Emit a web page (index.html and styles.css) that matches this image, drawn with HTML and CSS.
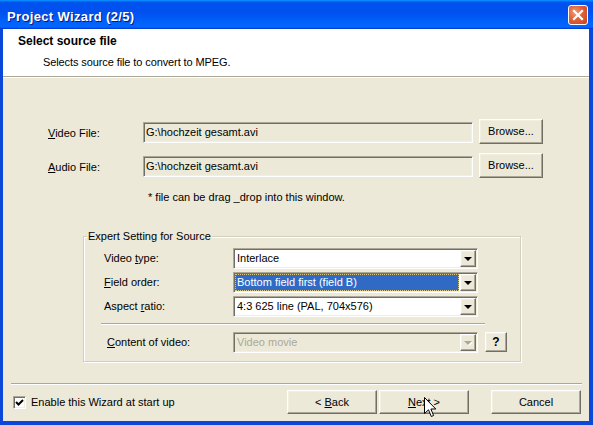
FILE: index.html
```html
<!DOCTYPE html>
<html lang="en">
<head>
<meta charset="utf-8">
<title>Project Wizard (2/5)</title>
<link rel="stylesheet" href="styles.css">
</head>
<body>
<div class="window">
  <div class="titlebar">
    <span class="title">Project Wizard (2/5)</span>
    <button class="close" aria-label="Close">
      <svg viewBox="0 0 18 18" width="18" height="18"><path d="M5 5 L13 13 M13 5 L5 13" stroke="#fff" stroke-width="2.2" stroke-linecap="square"/></svg>
    </button>
  </div>
  <div class="client">
    <div class="header">
      <div class="h-title">Select source file</div>
      <div class="h-sub">Selects source file to convert to MPEG.</div>
    </div>
    <div class="body">
      <div class="main">
        <div class="files">
          <span class="flabel"><u>V</u>ideo File:</span>
          <div class="field sunken">G:\hochzeit gesamt.avi</div>
          <button class="btn raised browse">Browse...</button>
          <span class="flabel"><u>A</u>udio File:</span>
          <div class="field sunken">G:\hochzeit gesamt.avi</div>
          <button class="btn raised browse">Browse...</button>
        </div>
        <div class="note">* file can be drag _drop into this window.</div>
        <fieldset class="group">
          <legend>Expert Setting for Source</legend>
          <div class="grid">
            <span class="glabel">Video <u>t</u>ype:</span>
            <div class="combo sunken"><span class="val">Interlace</span><span class="dd raised"><i class="tri"></i></span></div>
            <span class="glabel"><u>F</u>ield order:</span>
            <div class="combo sunken"><span class="val sel">Bottom field first (field B)</span><span class="dd raised"><i class="tri"></i></span></div>
            <span class="glabel">Aspect <u>r</u>atio:</span>
            <div class="combo sunken"><span class="val">4:3 625 line (PAL, 704x576)</span><span class="dd raised"><i class="tri"></i></span></div>
          </div>
          <div class="gsep"></div>
          <div class="crow">
            <span class="glabel indent"><u>C</u>ontent of video:</span>
            <div class="combo sunken disabled"><span class="val">Video movie</span><span class="dd raised"><i class="tri"></i></span></div>
            <button class="btn raised help">?</button>
          </div>
        </fieldset>
      </div>
      <div class="footer">
        <div class="fsep"></div>
        <div class="actions">
          <label class="check">
            <span class="box sunken"><svg viewBox="0 0 9 9" width="9" height="9"><path d="M1 4 L3.5 6.5 L8 2" fill="none" stroke="#000" stroke-width="2"/></svg></span>
            <span>Enable this Wizard at start up</span>
          </label>
          <button class="btn raised nav back">&lt; <u>B</u>ack</button>
          <button class="btn raised nav next"><u>N</u>ext &gt;
            <svg class="cursor" viewBox="0 0 13 21" width="13" height="21"><path d="M0.5 0.5 V16.5 L4.5 12.8 L7.3 19.5 L9.6 18.5 L6.9 12 H11.8 Z" fill="#fff" stroke="#000" stroke-width="1" stroke-linejoin="miter"/></svg>
          </button>
          <button class="btn raised nav cancel">Cancel</button>
        </div>
      </div>
    </div>
  </div>
</div>
</body>
</html>
```

FILE: styles.css
```css
* { box-sizing: border-box; }
html, body { margin: 0; padding: 0; }
body {
  width: 593px;
  height: 425px;
  overflow: hidden;
  font: 11px/13px "Liberation Sans", Arial, sans-serif;
  color: #000;
  background: #ECE9D8;
}
button { font: inherit; color: inherit; margin: 0; }
u { text-decoration: underline; text-underline-offset: 1px; }

.window {
  width: 593px;
  height: 425px;
  display: flex;
  flex-direction: column;
  background: #0B47D8;
}

.titlebar {
  height: 29px;
  flex: none;
  display: flex;
  align-items: center;
  justify-content: space-between;
  padding: 0 5px 0 7px;
  background: linear-gradient(180deg, #0997ff, #0053ee 8%, #0050ee 40%, #0066ff 88%, #0066ff 93%, #005bff 95%, #003dd7 96%, #003dd7);
}
.title {
  margin-top: 3px;
  color: #fff;
  font-weight: bold;
  font-size: 13px;
  letter-spacing: 0.35px;
  text-shadow: 1px 1px #0a1882;
}
.close {
  width: 20px;
  height: 20px;
  padding: 0;
  margin-top: 1px;
  border: 1px solid #fff;
  border-radius: 3px;
  background: radial-gradient(circle at 35% 35%, #f29a76 0, #e0603a 45%, #c8421b 100%);
  display: flex;
  align-items: center;
  justify-content: center;
}

.client {
  flex: 1;
  margin: 0 4px 4px 3px;
  background: #ECE9D8;
  display: flex;
  flex-direction: column;
}

.header {
  height: 48px;
  flex: none;
  background: #fff;
  border-bottom: 1px solid #ACA899;
  padding: 5px 0 0 15px;
}
.h-title { font-weight: bold; font-size: 12px; line-height: 15px; }
.h-sub { margin: 7px 0 0 25px; letter-spacing: -0.1px; }

.body {
  flex: 1;
  border-top: 1px solid #fff;
  display: flex;
  flex-direction: column;
}
.main { padding: 41px 0 0 45px; }

.sunken {
  border: 1px solid;
  border-color: #ACA899 #fff #fff #ACA899;
  box-shadow: inset 1px 1px #716F64, inset -1px -1px #F1EFE2;
}
.raised {
  border: 1px solid;
  border-color: #fff #716F64 #716F64 #fff;
  box-shadow: inset -1px -1px #ACA899, inset 1px 1px #F1EFE2;
  background: #ECE9D8;
}
.btn { padding: 0; cursor: default; }

.files {
  display: grid;
  grid-template-columns: 89px 330px 64px;
  grid-auto-rows: 25px;
  column-gap: 6px;
  row-gap: 9px;
}
.flabel { align-self: start; margin-top: 5px; line-height: 19px; }
.field {
  align-self: start;
  margin-top: 3px;
  height: 21px;
  line-height: 19px;
  padding: 0 2px;
  white-space: nowrap;
  overflow: hidden;
}
.browse { height: 25px; }

.note { margin: 13px 0 0 100px; }

.group {
  margin: 26px 0 0 35px;
  width: 438px;
  padding: 5px 0 8px 20px;
  border: 1px solid #D0D0BF;
  box-shadow: inset 1px 1px #fff, 1px 1px #fff;
  min-inline-size: 0;
}
.group legend {
  margin-left: -17px;
  padding: 0 1px;
  background: #ECE9D8;
  line-height: 13px;
}
.grid {
  display: grid;
  grid-template-columns: 129px 245px;
  grid-auto-rows: 21px;
  row-gap: 3px;
}
.glabel { line-height: 21px; white-space: nowrap; }
.glabel.indent { padding-left: 3px; }

.combo {
  height: 21px;
  padding: 1px;
  background: #fff;
  display: flex;
}
.combo .val {
  flex: 1;
  padding-left: 2px;
  line-height: 17px;
  white-space: nowrap;
  overflow: hidden;
}
.combo .val.sel {
  margin-right: 1px;
  padding-left: 1px;
  line-height: 15px;
  background: #316AC5;
  color: #fff;
  border: 1px dotted #D8C98A;
}
.dd {
  width: 16px;
  height: 17px;
  flex: none;
  display: flex;
  align-items: center;
  justify-content: center;
}
.tri {
  width: 0;
  height: 0;
  border-left: 4px solid transparent;
  border-right: 4px solid transparent;
  border-top: 4px solid #000;
  margin-top: 1px;
}
.combo.disabled { background: #ECE9D8; }
.combo.disabled .val { color: #ACA899; }
.combo.disabled .tri { border-top-color: #ACA899; filter: drop-shadow(1px 1px 0 #fff); }

.gsep {
  margin: 6px 0 0 -3px;
  width: 384px;
  height: 2px;
  border-top: 1px solid #ACA899;
  border-bottom: 1px solid #fff;
}
.crow {
  margin-top: 7px;
  display: grid;
  grid-template-columns: 129px 245px 22px;
  grid-auto-rows: 21px;
}
.help {
  margin-left: 7px;
  width: 22px;
  height: 20px;
  font-weight: bold;
  font-size: 12px;
}

.footer { margin-top: auto; }
.fsep {
  margin: 0 7px 0 8px;
  height: 2px;
  border-top: 1px solid #ACA899;
  border-bottom: 1px solid #fff;
}
.actions {
  display: flex;
  align-items: center;
  padding: 5px 8px 7px 10px;
}
.check { display: flex; align-items: center; gap: 5px; margin-top: 1px; }
.box {
  width: 13px;
  height: 13px;
  background: #fff;
  display: flex;
  align-items: center;
  justify-content: center;
}
.nav { width: 90px; height: 24px; }
.back { margin-left: auto; }
.next { margin-left: 2px; position: relative; }
.cancel { margin-left: 22px; }
.cursor { position: absolute; left: 44px; top: 6px; }
```
